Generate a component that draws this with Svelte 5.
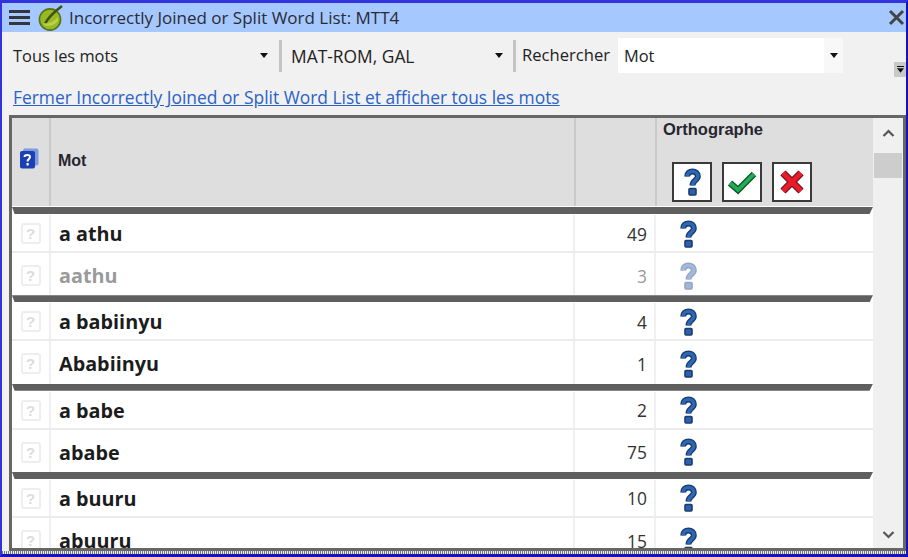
<script>
  const groups = [
    [{ w: 'a athu', n: 49 }, { w: 'aathu', n: 3, dim: true }],
    [{ w: 'a babiinyu', n: 4 }, { w: 'Ababiinyu', n: 1 }],
    [{ w: 'a babe', n: 2 }, { w: 'ababe', n: 75 }],
    [{ w: 'a buuru', n: 10 }, { w: 'abuuru', n: 15 }]
  ];
  const hook = 'M4.2 8.5C4.2 5.2 6.4 3.4 9.5 3.4S14.8 5.2 14.8 8.2C14.8 12.5 9.5 12 9.5 17.5';
</script>

{#snippet q()}
  <svg class="q" width="19" height="28" viewBox="0 0 19 28" aria-hidden="true">
    <path d={hook} fill="none" stroke="#1d3a6e" stroke-width="6" />
    <rect x="6" y="20.5" width="7" height="6.5" rx="1" fill="#2a63ad" stroke="#1d3a6e" stroke-width="1.6" />
    <path d={hook} fill="none" stroke="#2a68b4" stroke-width="3.4" />
  </svg>
{/snippet}

{#snippet arrow()}
  <svg class="arrow" width="8" height="5" viewBox="0 0 8 5" aria-hidden="true"><path d="M0 0h8L4 5z" fill="#111" /></svg>
{/snippet}

<div class="win">
  <header class="title">
    <div class="burger"><i></i><i></i><i></i></div>
    <svg class="logo" width="26" height="27" viewBox="0 0 26 27" aria-hidden="true">
      <circle cx="12" cy="15.5" r="10.6" fill="#97ba22" stroke="#5c6f18" stroke-width="1.6" />
      <path d="M7 20C10 13 16 8 24 2" fill="none" stroke="#3f5212" stroke-width="2.6" />
      <path d="M5 19C9 20 15 19 20 13L20 17C16 22 9 23 6 21z" fill="#b9d24c" />
    </svg>
    <span class="ttext">Incorrectly Joined or Split Word List: MTT4</span>
    <svg class="close" width="17" height="17" viewBox="0 0 17 17" aria-hidden="true"><path d="M2 2L15 15M15 2L2 15" stroke="#444" stroke-width="3" /></svg>
  </header>

  <div class="toolbar">
    <div class="tools">
      <div class="drop d1"><span>Tous les mots</span>{@render arrow()}</div>
      <div class="sep"></div>
      <div class="drop d2"><span>MAT-ROM, GAL</span>{@render arrow()}</div>
      <div class="sep"></div>
      <span class="label">Rechercher</span>
      <div class="combo"><span>Mot</span><div class="cbtn">{@render arrow()}</div></div>
      <div class="more"><i></i>{@render arrow()}</div>
    </div>
    <a class="link" href="#top">Fermer Incorrectly Joined or Split Word List et afficher tous les mots</a>
  </div>

  <div class="frame">
    <div class="main">
      <div class="head">
        <div class="hc c1">
          <svg width="20" height="21" viewBox="0 0 20 21" aria-hidden="true">
            <rect x="4" y="0.5" width="15.5" height="17" rx="2" fill="#7f9be0" />
            <rect x="1" y="3" width="15" height="17.5" rx="2" fill="#1c3fb4" />
            <path d="M5.5 9C5.5 6.5 11 6 11 9C11 11 8.5 11 8.5 13.5" fill="none" stroke="#fff" stroke-width="2" />
            <rect x="7.5" y="15" width="2.2" height="2.5" fill="#fff" />
          </svg>
        </div>
        <div class="hc c2">Mot</div>
        <div class="hc c3"></div>
        <div class="hc c4">
          <div class="hname">Orthographe</div>
          <div class="btns">
            <div class="btn">{@render q()}</div>
            <div class="btn">
              <svg width="32" height="26" viewBox="0 0 32 26" aria-hidden="true"><path d="M4 14L12 21L28 5" fill="none" stroke="#14532d" stroke-width="6.4" /><path d="M4 14L12 21L28 5" fill="none" stroke="#1fae54" stroke-width="3.8" /></svg>
            </div>
            <div class="btn">
              <svg width="26" height="26" viewBox="0 0 26 26" aria-hidden="true"><path d="M4 4L22 22M22 4L4 22" stroke="#6b1118" stroke-width="7.4" /><path d="M4 4L22 22M22 4L4 22" stroke="#ea1c2c" stroke-width="5" /></svg>
            </div>
          </div>
        </div>
      </div>
      <div class="body">
        {#each groups as g}
          <section class="group">
            <div class="bar"></div>
            {#each g as r, i}
              <div class="row" class:dim={r.dim} class:second={i === 1}>
                <div class="cell c1">
                  <span class="ghost">?</span>
                </div>
                <div class="cell c2 word">{r.w}</div>
                <div class="cell c3 num">{r.n}</div>
                <div class="cell c4 st">{@render q()}</div>
              </div>
            {/each}
          </section>
        {/each}
      </div>
    </div>
    <aside class="scroll">
      <svg width="13" height="8" viewBox="0 0 13 8" aria-hidden="true"><path d="M1.5 7L6.5 2L11.5 7" fill="none" stroke="#555" stroke-width="2.2" /></svg>
      <div class="thumb"></div>
      <div class="fill"></div>
      <svg width="13" height="8" viewBox="0 0 13 8" aria-hidden="true"><path d="M1.5 1L6.5 6L11.5 1" fill="none" stroke="#555" stroke-width="2.2" /></svg>
    </aside>
  </div>
  <div class="dots"></div>
</div>

<style>
  :global(body) { margin: 0; background: #f0f0f0; }
  .win {
    width: 908px; height: 557px; box-sizing: border-box; overflow: hidden;
    border: solid #3333dd; border-width: 3px 2px 3px 2px; border-right-color: #1414b4; border-bottom-color: #1414b4;
    background: #f1f1f1; display: flex; flex-direction: column;
    font-family: "Open Sans", "Noto Sans", sans-serif; color: #222;
  }
  .title { height: 29px; flex: none; background: #a4c8ff; display: flex; align-items: center; padding-left: 7px; }
  .burger { display: flex; flex-direction: column; gap: 3px; width: 21px; }
  .burger i { height: 3px; background: #33363c; display: block; }
  .logo { margin-left: 8px; }
  .ttext { margin-left: 5px; font-size: 17px; color: #2b2b33; white-space: nowrap; }
  .close { margin-left: auto; margin-right: 1px; }
  .toolbar { height: 83px; flex: none; padding: 6px 0 0 0; box-sizing: border-box; }
  .tools { display: flex; align-items: center; height: 35px; position: relative; }
  .drop { display: flex; align-items: center; justify-content: space-between; box-sizing: border-box; white-space: nowrap; }
  .d1 { width: 266px; padding-left: 11px; margin-right: 11px; font-size: 16.4px; }
  .d2 { width: 218px; padding-left: 4px; margin-left: 5px; margin-right: 8px; padding-right: 2px; font-size: 17.4px; }
  .sep { width: 3px; height: 32px; background: #c4c4c4; flex: none; }
  .label { font-size: 16.6px; margin-left: 6px; width: 96px; white-space: nowrap; margin-top: -3px; }
  .combo { width: 225px; height: 35px; background: #fff; display: flex; align-items: center; justify-content: space-between; padding-left: 6px; box-sizing: border-box; font-size: 16.4px; }
  .cbtn { width: 19px; height: 35px; background: #f8f8f8; display: flex; align-items: center; justify-content: center; }
  .more { position: absolute; left: 892px; top: 24px; width: 12px; height: 15px; background: #c9c9c9; display: flex; flex-direction: column; align-items: center; justify-content: center; gap: 1px; }
  .more i { width: 7px; height: 1px; background: #111; display: block; }
  .more .arrow { width: 7px; height: 5px; }
  .link { display: block; margin: 14px 0 0 11px; font-size: 17.4px; color: #2a62c8; line-height: 20px; text-decoration: underline; white-space: nowrap; }
  .frame { margin-left: 7px; width: 897px; height: 436px; box-sizing: border-box; border: 3px solid #666; display: flex; background: #fff; overflow: hidden; flex: none; }
  .main { width: 861px; flex: none; }
  .head { height: 88px; background: #dedede; display: flex; border-bottom: 1px solid #fff; }
  .c3 { width: 81px; flex: none; }
  .c4 { flex: 1; }
  .hc { box-sizing: border-box; border-right: 2px solid #c9c9c9; font: bold 17px "Liberation Sans", sans-serif; color: #262630; }
  .hc.c1 { width: 39px; flex: none; display: flex; align-items: center; justify-content: center; padding: 0 3px 7px 0; }
  .hc.c2 { width: 525px; flex: none; display: flex; align-items: center; padding-left: 7px; padding-bottom: 3px; font-size: 16px; }
  .hc.c4 { border-right: none; padding: 3px 0 0 6px; font-size: 16.5px; }
  .hname { line-height: 16px; }
  .btns { display: flex; gap: 10px; margin-top: 25px; margin-left: 9px; }
  .btn { width: 40px; height: 40px; box-sizing: border-box; border: 2px solid #3a3a3a; background: #fff; display: flex; align-items: center; justify-content: center; }
  .group { height: 88.33px; display: flex; flex-direction: column; }
  .bar { height: 7px; flex: none; background: #5f5f5f; margin-bottom: 1px; clip-path: polygon(0 0, 100% 0, 99.6% 100%, 0.3% 100%); }
  .row { display: flex; height: 38px; flex: none; box-sizing: border-box; border-bottom: 2px solid #ececec; align-items: stretch; }
  .row.second { height: 42.33px; border-bottom: none; }
  .cell { display: flex; align-items: center; box-sizing: border-box; padding-top: 1px; }
  .row.second .cell { padding-top: 3px; }
  .cell.c1 { width: 39px; flex: none; justify-content: center; border-right: 2px solid #f0f0f0; }
  .cell.c2 { width: 524px; flex: none; padding-left: 8px; border-right: 2px solid #f0f0f0; }
  .cell.c3 { border-right: 2px solid #f0f0f0; }
  .ghost { width: 20px; height: 21px; box-sizing: border-box; border: 2px solid #eeeeee; border-radius: 3px; font: bold 15px "Liberation Sans", sans-serif; color: #dcdcdc; display: flex; align-items: center; justify-content: center; }
  .word { font: bold 19.8px "Open Sans", "Noto Sans", sans-serif; color: #1c1c1c; white-space: nowrap; }
  .num { justify-content: flex-end; padding-right: 7px; font-size: 17.4px; color: #333; }
  .st { padding-left: 23px; }
  .dim .word, .dim .num { color: #9a9a9a; }
  .dim .q { opacity: 0.45; }
  .scroll { flex: 1; background: #f0f0f0; display: flex; flex-direction: column; align-items: center; padding: 11px 0 9px; }
  .thumb { align-self: stretch; height: 25px; margin: 16px 1px 0; background: #cdcdcd; }
  .fill { flex: 1; }
  .dots { height: 3px; flex: none; background: repeating-linear-gradient(90deg, #777 0 1px, #eee 1px 2px); }
</style>
